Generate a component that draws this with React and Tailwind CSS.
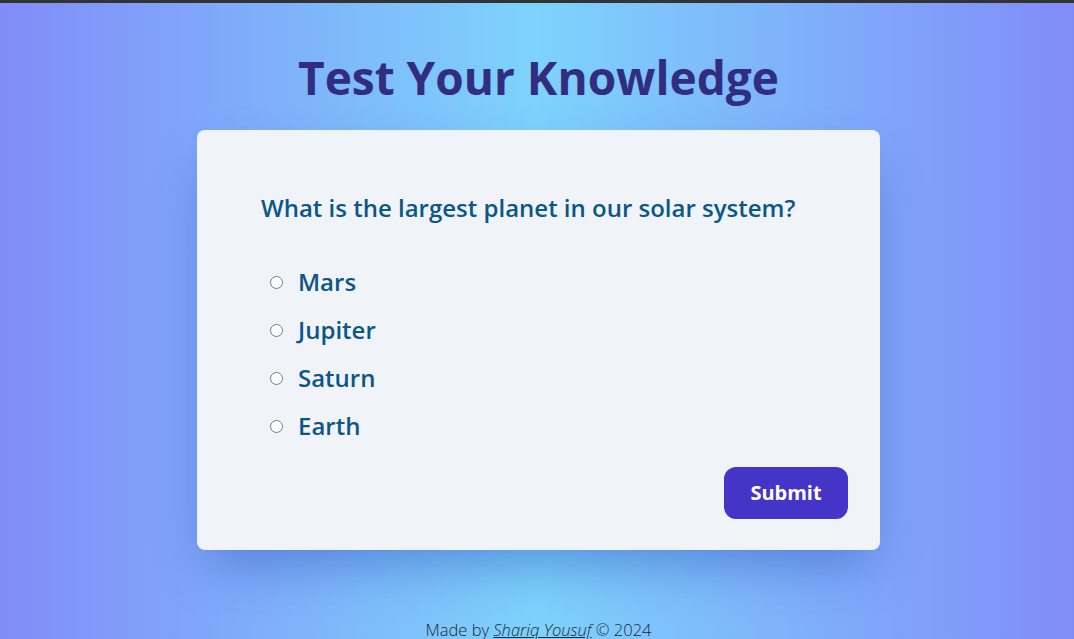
import React, { useState } from "react";

const options = ["Mars", "Jupiter", "Saturn", "Earth"];

export default function App() {
  const [answer, setAnswer] = useState(null);

  return (
    <div
      className="min-h-screen flex flex-col items-center pl-[3px] border-t-[3px] border-[#333] bg-[linear-gradient(90deg,#818cf8_0%,#7dd3fc_50%,#818cf8_100%)] text-[#0c5688]"
      style={{ fontFamily: "'Open Sans', 'Noto Sans', sans-serif" }}
    >
      <h1 className="mt-[42px] text-[46px] leading-[64px] font-bold text-[#312e81]">
        Test Your Knowledge
      </h1>

      <div className="mt-[21px] w-[683px] h-[420px] rounded-lg bg-[#f0f4f9] shadow-[0_25px_50px_-12px_rgba(30,64,175,0.45)] px-8 pt-[62px] pb-[31px] flex flex-col">
        <h2 className="px-8 text-[24px] leading-8 font-semibold text-[#0c5688]">
          What is the largest planet in our solar system?
        </h2>

        <ul className="mt-[42px] px-8 flex flex-col gap-4">
          {options.map((opt) => (
            <li key={opt}>
              <label className="flex items-center h-8 text-[24px] font-semibold">
                <input
                  type="radio"
                  name="q"
                  checked={answer === opt}
                  onChange={() => setAnswer(opt)}
                  className="ml-[9px] mr-[15px] w-[13px] h-[13px]"
                />
                {opt}
              </label>
            </li>
          ))}
        </ul>

        <div className="mt-auto flex justify-end">
          <button className="w-[124px] h-[52px] rounded-xl bg-[#4435c8] text-white text-[20px] font-bold">
            Submit
          </button>
        </div>
      </div>

      <p className="mt-auto -mb-[3px] text-[16.5px] leading-6 text-[#1f2937] font-light">
        Made by{" "}
        <a href="#" className="italic underline">
          Shariq Yousuf
        </a>{" "}
        © 2024
      </p>
    </div>
  );
}
